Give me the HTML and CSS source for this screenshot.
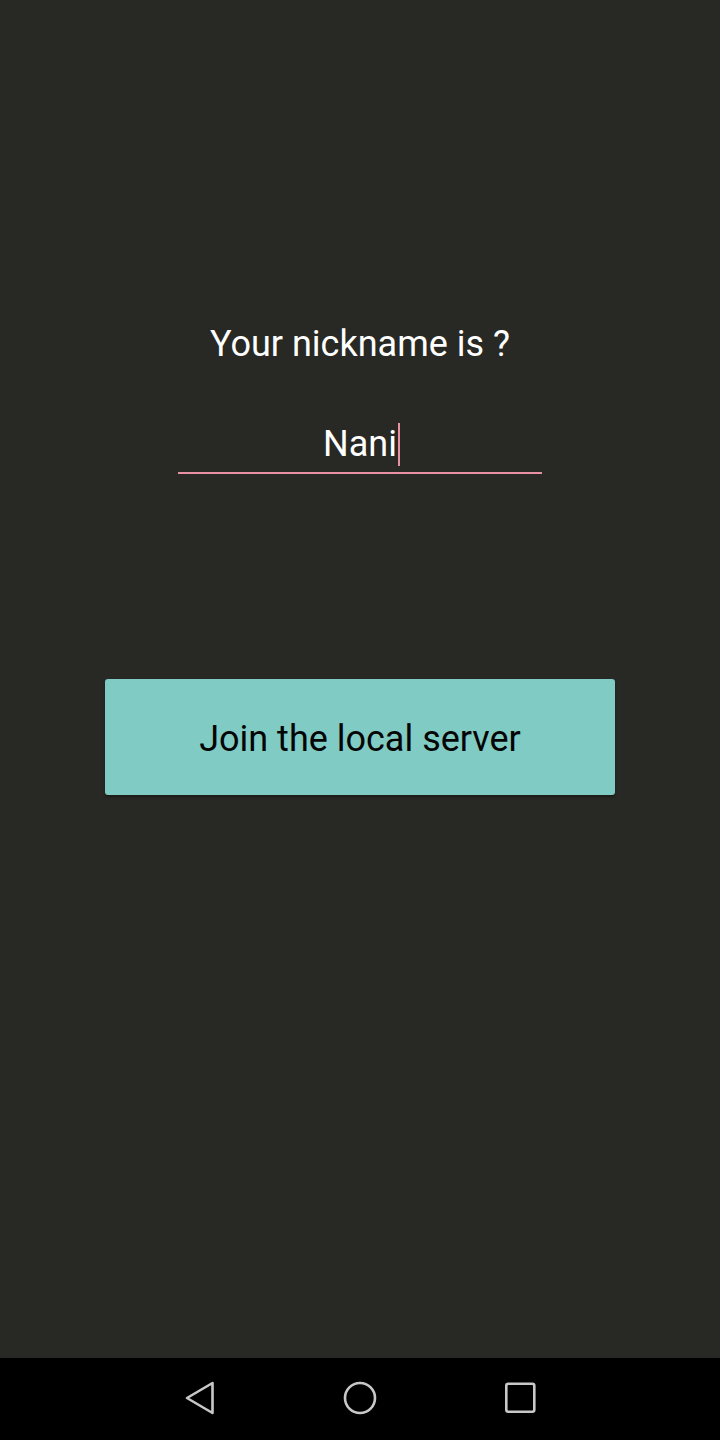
FILE: index.html
```html
<!DOCTYPE html>
<html>
<head>
<meta charset="utf-8">
<link rel="stylesheet" href="styles.css">
</head>
<body>
<div class="screen">
  <main class="content">
    <h1 class="title">Your nickname is ?</h1>
    <div class="field">
      <span class="value">Nani</span><span class="caret"></span>
    </div>
    <button class="join">Join the local server</button>
  </main>
  <nav class="navbar">
    <svg class="nav-icon" width="40" height="40" viewBox="0 0 40 40"><path d="M32.5 5 L32.5 35 L7 20 Z" fill="none" stroke="#c8c8c8" stroke-width="2.6" stroke-linejoin="round"/></svg>
    <svg class="nav-icon" width="40" height="40" viewBox="0 0 40 40"><circle cx="20" cy="20" r="15" fill="none" stroke="#c8c8c8" stroke-width="2.6"/></svg>
    <svg class="nav-icon" width="40" height="40" viewBox="0 0 40 40"><rect x="6.3" y="5.7" width="28" height="28" rx="2" fill="none" stroke="#c8c8c8" stroke-width="2.6"/></svg>
  </nav>
</div>
</body>
</html>
```
FILE: styles.css
```css
* { box-sizing: border-box; }
html, body { margin: 0; padding: 0; }
body {
  width: 720px;
  height: 1440px;
  background: #282824;
  font-family: Roboto, "Noto Sans", sans-serif;
  overflow: hidden;
}
.screen {
  display: flex;
  flex-direction: column;
  height: 1440px;
}
.content {
  flex: 1;
  display: flex;
  flex-direction: column;
  align-items: center;
  padding-top: 321px;
}
.title {
  margin: 0;
  color: #ffffff;
  font-weight: 400;
  font-size: 36px;
  line-height: 46px;
}
.field {
  margin-top: 49px;
  width: 364px;
  height: 58px;
  border-bottom: 2px solid #e891a4;
  display: flex;
  justify-content: center;
  align-items: center;
  padding-left: 3px;
}
.value {
  color: #ffffff;
  font-size: 36px;
  line-height: 44px;
}
.caret {
  width: 2px;
  height: 43px;
  background: #e891a4;
  margin-left: 1px;
}
.join {
  margin-top: 205px;
  width: 510px;
  height: 116px;
  border: none;
  border-radius: 3px;
  background: #80cbc4;
  color: #050505;
  font-family: Roboto, "Noto Sans", sans-serif;
  font-size: 36px;
  padding: 3px 0 0 0;
  box-shadow: 0 2px 3px rgba(0,0,0,0.35);
}
.navbar {
  height: 82px;
  background: #000000;
  display: flex;
  justify-content: center;
  align-items: center;
  gap: 120px;
  padding-bottom: 2px;
}
.nav-icon { display: block; }
```
